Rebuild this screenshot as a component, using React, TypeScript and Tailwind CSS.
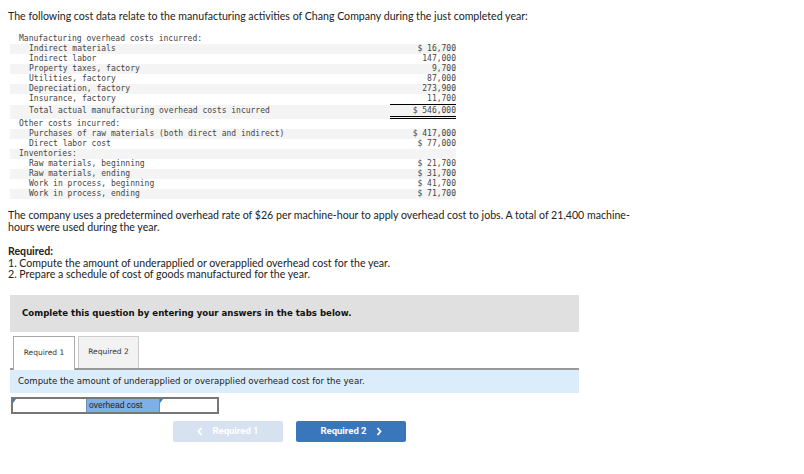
import React from "react";

type Row = {
  label: string;
  value?: string;
  indent?: boolean;
  line?: "single" | "double";
};

const rows: Row[] = [
  { label: "Manufacturing overhead costs incurred:" },
  { label: "Indirect materials", value: "$ 16,700", indent: true },
  { label: "Indirect labor", value: "147,000", indent: true },
  { label: "Property taxes, factory", value: "9,700", indent: true },
  { label: "Utilities, factory", value: "87,000", indent: true },
  { label: "Depreciation, factory", value: "273,900", indent: true },
  { label: "Insurance, factory", value: "11,700", indent: true, line: "single" },
  { label: "Total actual manufacturing overhead costs incurred", value: "$ 546,000", indent: true, line: "double" },
  { label: "Other costs incurred:" },
  { label: "Purchases of raw materials (both direct and indirect)", value: "$ 417,000", indent: true },
  { label: "Direct labor cost", value: "$ 77,000", indent: true },
  { label: "Inventories:" },
  { label: "Raw materials, beginning", value: "$ 21,700", indent: true },
  { label: "Raw materials, ending", value: "$ 31,700", indent: true },
  { label: "Work in process, beginning", value: "$ 41,700", indent: true },
  { label: "Work in process, ending", value: "$ 71,700", indent: true },
];

function DataTable() {
  return (
    <div className="ml-[10px] mt-[11px] w-[446px] font-['DejaVu_Sans_Mono','Liberation_Mono',monospace] text-[8px] leading-[10px] text-[#444]">
      {rows.map((r, i) => (
        <div
          key={i}
          className={`flex items-stretch ${i % 2 === 1 ? "bg-[#f4f4f4]" : "bg-white"} ${
            r.line === "double" ? "pt-[1px]" : ""
          }`}
        >
          <span className={`flex-1 whitespace-pre ${r.indent ? "pl-[19px]" : "pl-[9px]"}`}>
            {r.label}
          </span>
          <span
            className={`w-[66px] text-right whitespace-pre ${
              r.line === "single"
                ? "border-b border-black"
                : r.line === "double"
                ? "border-b-[3px] border-double border-black"
                : ""
            }`}
          >
            {r.value ?? ""}
          </span>
        </div>
      ))}
    </div>
  );
}

function InputMark() {
  return (
    <span className="absolute left-0 top-0 h-0 w-0 border-t-[4px] border-r-[3px] border-t-[#3a77bd] border-r-transparent" />
  );
}

function Chevron({ dir }: { dir: "left" | "right" }) {
  return (
    <svg width="6" height="9" viewBox="0 0 6 9" className="shrink-0">
      <path
        d={dir === "left" ? "M4.5 1 L1.5 4.5 L4.5 8" : "M1.5 1 L4.5 4.5 L1.5 8"}
        fill="none"
        stroke="white"
        strokeWidth="1.8"
      />
    </svg>
  );
}

export default function App() {
  return (
    <div className="h-[474px] w-[804px] bg-white text-[#222]">
      <div className="font-['Lato','Open_Sans',sans-serif] text-[10.6px]">
        <p className="ml-[8px] pt-[10px] leading-[13px]">
          The following cost data relate to the manufacturing activities of Chang Company during the just completed year:
        </p>

        <DataTable />

        <p className="ml-[8px] mt-[10px] leading-[12px]">
          The company uses a predetermined overhead rate of $26 per machine-hour to apply overhead cost to jobs. A total of 21,400 machine-
          <br />
          hours were used during the year.
        </p>

        <div className="ml-[8px] mt-[13px] leading-[11.5px]">
          <p className="font-bold">Required:</p>
          <p>1. Compute the amount of underapplied or overapplied overhead cost for the year.</p>
          <p>2. Prepare a schedule of cost of goods manufactured for the year.</p>
        </div>
      </div>

      <div className="ml-[10px] w-[569px] font-['DejaVu_Sans','Verdana',sans-serif]">
        <div className="mt-[14px] flex h-[37px] items-center bg-[#e0e0e0] pl-[12px] text-[8.6px] font-bold text-[#111]">
          Complete this question by entering your answers in the tabs below.
        </div>

        <div className="mt-[4px] flex items-start gap-[3px] border-b-2 border-[#999] pl-[3px]">
          <div className="-mb-[2px] flex h-[34px] w-[62px] items-center justify-center border border-b-0 border-[#aaa] bg-white pb-[1px] text-[7.5px] text-[#333]">
            Required 1
          </div>
          <div className="flex h-[32px] w-[61px] items-center justify-center border border-b-0 border-[#ccc] bg-[#f2f2f2] text-[7.5px] text-[#333]">
            Required 2
          </div>
        </div>

        <div className="flex h-[23px] items-center bg-[#dbedfb] pl-[8px] text-[8.6px] text-[#222]">
          Compute the amount of underapplied or overapplied overhead cost for the year.
        </div>

        <div className="ml-[1px] mt-[4px] flex h-[17px] w-[208px] border-2 border-[#777] font-['Liberation_Sans',Arial,sans-serif] text-[8.5px]">
          <div className="relative w-[74px] border-r border-[#6f8fb8] bg-white">
            <InputMark />
          </div>
          <div className="flex w-[73px] items-center border-r border-[#6f8fb8] bg-[#7eafe6] pl-[2px] text-[#222]">
            overhead cost
          </div>
          <div className="relative flex-1 bg-white">
            <InputMark />
          </div>
        </div>

        <div className="mt-[7px] flex gap-[13px] pl-[163px] font-['Roboto','Liberation_Sans',sans-serif] text-[9.5px] font-bold text-white">
          <div className="flex h-[21px] w-[110px] items-center justify-center gap-[9px] rounded-[2px] bg-[#d6e2f0]">
            <Chevron dir="left" />
            <span>Required 1</span>
          </div>
          <div className="flex h-[21px] w-[110px] items-center justify-center gap-[9px] rounded-[2px] bg-[#3a76bb]">
            <span>Required 2</span>
            <Chevron dir="right" />
          </div>
        </div>
      </div>
    </div>
  );
}
